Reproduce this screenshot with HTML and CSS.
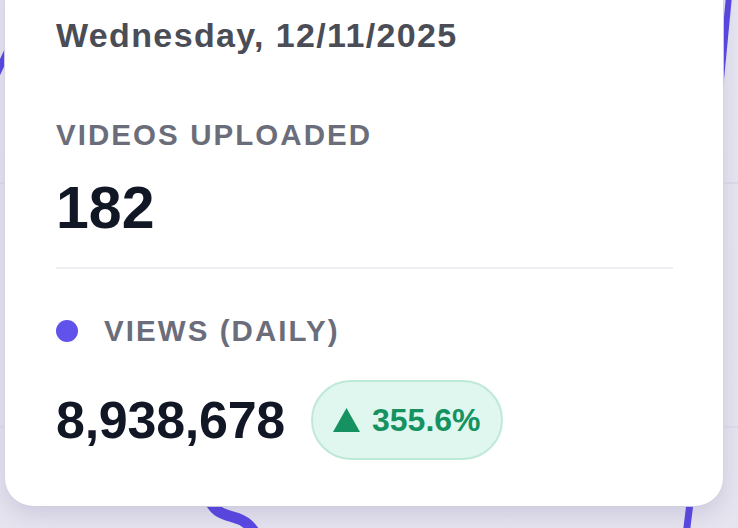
FILE: index.html
```html
<!DOCTYPE html>
<html lang="en">
<head>
<meta charset="utf-8">
<title>Tooltip</title>
<link rel="stylesheet" href="styles.css">
</head>
<body>
<div class="chart">
  <svg class="chart-canvas" width="738" height="528" viewBox="0 0 738 528" xmlns="http://www.w3.org/2000/svg">
    <line x1="0" y1="183" x2="738" y2="183" stroke="#d9d7e5" stroke-width="1.5"/>
    <line x1="0" y1="427" x2="738" y2="427" stroke="#dcdae7" stroke-width="1.5"/>
    <path d="M-8 84 L10 46" stroke="#5a48e3" stroke-width="7" fill="none" stroke-linecap="round"/>
    <path d="M729 -4 L720 90" stroke="#5a48e3" stroke-width="6" fill="none"/>
    <path d="M691 495 L686 535" stroke="#5a48e3" stroke-width="7" fill="none"/>
    <path d="M207 494 C213 512 222 514 233 517 C245 520 252 526 259 540" stroke="#5a48e3" stroke-width="11" fill="none" stroke-linecap="round"/>
  </svg>
  <div class="tooltip">
    <div class="tt-date">Wednesday, 12/11/2025</div>
    <div class="tt-label tt-label-first">VIDEOS UPLOADED</div>
    <div class="tt-value">182</div>
    <div class="tt-divider"></div>
    <div class="tt-series">
      <span class="tt-dot"></span>
      <span class="tt-label">VIEWS (DAILY)</span>
    </div>
    <div class="tt-metric">
      <span class="tt-number">8,938,678</span>
      <span class="tt-badge">
        <svg class="tt-arrow" width="27" height="24" viewBox="0 0 27 24" xmlns="http://www.w3.org/2000/svg"><path d="M13.5 0 L27 24 L0 24 Z" fill="#15925f"/></svg>
        <span class="tt-pct">355.6%</span>
      </span>
    </div>
  </div>
</div>
</body>
</html>
```
FILE: styles.css
```css
html, body {
  margin: 0;
  padding: 0;
}
body {
  width: 738px;
  height: 528px;
  overflow: hidden;
  background: #e7e5f0;
  font-family: "Liberation Sans", Arial, sans-serif;
}
.chart {
  position: relative;
  width: 738px;
  height: 528px;
  background: linear-gradient(180deg, #e8e6f1 0%, #e6e4ef 100%);
}
.chart-canvas {
  position: absolute;
  left: 0;
  top: 0;
}
.tooltip {
  position: absolute;
  left: 5px;
  top: -20px;
  width: 718px;
  box-sizing: border-box;
  padding: 35px 50px 46px 51px;
  background: #ffffff;
  border-radius: 0 0 28px 28px;
  box-shadow: 0 8px 22px rgba(70, 60, 130, 0.16), 0 0 0 1px rgba(225, 225, 235, 0.9);
  display: flex;
  flex-direction: column;
}
.tt-date {
  font-size: 34px;
  line-height: 40px;
  font-weight: 700;
  letter-spacing: 0.04em;
  color: #4a4d56;
  white-space: nowrap;
}
.tt-label {
  font-size: 29.5px;
  line-height: 36px;
  font-weight: 700;
  letter-spacing: 0.07em;
  color: #6b6e7a;
  white-space: nowrap;
}
.tt-label-first {
  margin-top: 62px;
}
.tt-value {
  margin-top: 23px;
  font-size: 59px;
  line-height: 64px;
  font-weight: 700;
  color: #121726;
}
.tt-divider {
  margin-top: 27px;
  height: 2px;
  background: #eeeff3;
}
.tt-series {
  margin-top: 42px;
  height: 40px;
  display: flex;
  align-items: center;
  gap: 26px;
}
.tt-dot {
  width: 22px;
  height: 22px;
  border-radius: 50%;
  background: #6152ec;
  flex: none;
}
.tt-metric {
  margin-top: 29px;
  display: flex;
  align-items: center;
  gap: 26px;
}
.tt-number {
  font-size: 52px;
  line-height: 80px;
  font-weight: 700;
  color: #121726;
  letter-spacing: -0.005em;
}
.tt-badge {
  height: 80px;
  box-sizing: border-box;
  display: flex;
  align-items: center;
  gap: 12px;
  padding: 0 20px 0 20px;
  border: 2px solid #bfe9d7;
  border-radius: 40px;
  background: #dff7ef;
}
.tt-arrow {
  display: block;
  flex: none;
}
.tt-pct {
  font-size: 32px;
  line-height: 40px;
  font-weight: 700;
  color: #15925f;
}
```
